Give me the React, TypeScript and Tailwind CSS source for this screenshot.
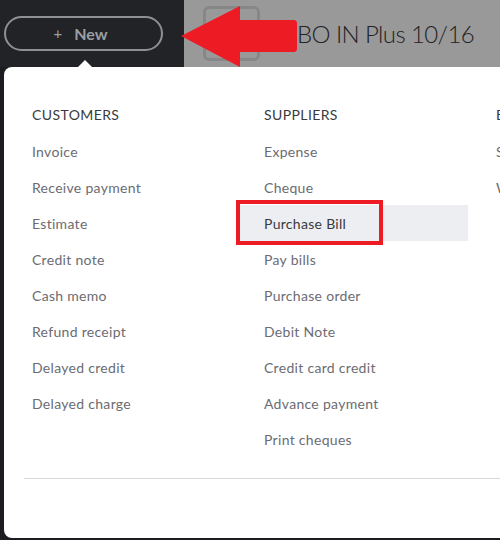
import React from "react";

const COLUMNS = [
  {
    title: "CUSTOMERS",
    items: [
      "Invoice",
      "Receive payment",
      "Estimate",
      "Credit note",
      "Cash memo",
      "Refund receipt",
      "Delayed credit",
      "Delayed charge",
    ],
  },
  {
    title: "SUPPLIERS",
    items: [
      "Expense",
      "Cheque",
      "Purchase Bill",
      "Pay bills",
      "Purchase order",
      "Debit Note",
      "Credit card credit",
      "Advance payment",
      "Print cheques",
    ],
  },
  {
    title: "EMPLOYEES",
    items: ["Single time activity", "Weekly timesheet"],
  },
];

const HIGHLIGHT = "Purchase Bill";

export default function App() {
  return (
    <div
      className="relative w-[500px] h-[540px] overflow-hidden bg-[#1c1d20]"
      style={{ fontFamily: "Lato, 'Noto Sans', sans-serif" }}
    >
      {/* top bar */}
      <div className="flex h-[67px]">
        <div className="w-[184px] shrink-0 bg-[#222326] pl-[4px] pt-[16px]">
          <button className="flex items-center justify-center w-[159px] h-[35px] pr-[6px] rounded-full border-2 border-[#8e9094] text-[#9a9ea4]">
            <span className="text-[15px] mr-[12px] font-normal">+</span>
            <span className="text-[16px] font-bold">New</span>
          </button>
        </div>
        <div className="flex-1 min-w-0 bg-[#999999] flex items-center overflow-hidden">
          <div className="ml-[19px] shrink-0 w-[57px] h-[55px] rounded-[6px] border-[3px] border-[#878787]" />
          <span className="ml-[37px] whitespace-nowrap text-[24px] font-light text-[#222] tracking-[-0.6px]">
            BO IN Plus 10/16
          </span>
        </div>
      </div>

      {/* caret */}
      <div className="absolute left-[78px] top-[60px] w-0 h-0 border-l-[7px] border-r-[7px] border-b-[7px] border-l-transparent border-r-transparent border-b-white" />

      {/* popup menu */}
      <div className="absolute left-[4px] top-[67px] w-[496px] h-[471px] overflow-hidden bg-white rounded-l-[8px]">
        <div className="flex pt-[38px]">
          {COLUMNS.map((col) => (
            <div key={col.title} className="w-[232px] shrink-0">
              <div className="pl-[28px] h-[28px] text-[14px] font-normal text-[#393a3d] tracking-[0.4px] leading-[20px] whitespace-nowrap">
                {col.title}
              </div>
              {col.items.map((item) => (
                <div
                  key={item}
                  className={
                    "relative pl-[28px] h-[36px] flex items-center text-[14px] tracking-[0.3px] whitespace-nowrap " +
                    (item === HIGHLIGHT
                      ? "bg-[#eceef1] text-[#393a3d]"
                      : "text-[#6b6c72]")
                  }
                >
                  {item}
                  {item === HIGHLIGHT && (
                    <div className="absolute left-0 top-[-5px] w-[147px] h-[45px] border-[4px] border-[#ed1c24]" />
                  )}
                </div>
              ))}
            </div>
          ))}
        </div>
        <div className="absolute left-[20px] right-0 top-[411px] h-px bg-[#d6d8dc]" />
      </div>

      {/* red annotation arrow */}
      <svg
        className="absolute left-0 top-0"
        width="500"
        height="70"
        viewBox="0 0 500 70"
      >
        <polygon
          points="181,36 240,6 240,20 295,20 297,22 297,50 295,52 240,52 240,67"
          fill="#ed1c24"
        />
      </svg>
    </div>
  );
}
